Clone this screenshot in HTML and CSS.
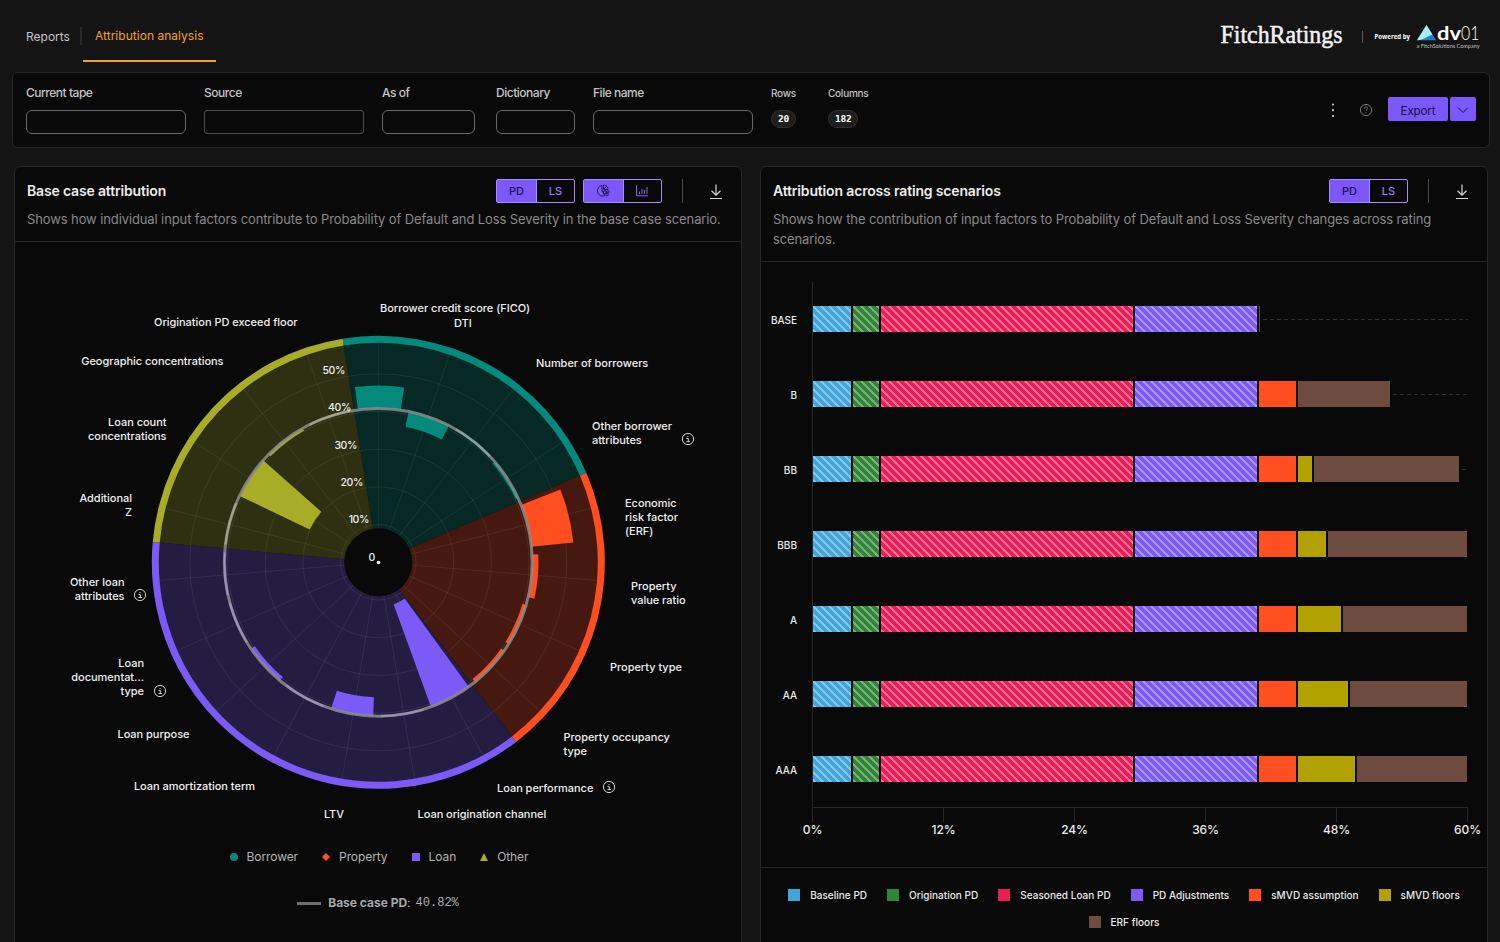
FILE: index.html
```html
<!DOCTYPE html>
<html lang="en">
<head>
    <meta charset="utf-8">
    <title>Attribution analysis</title>
    <link rel="stylesheet" href="styles.css">
</head>
<body>
    <header class="topbar">
        <nav class="tabs">
            <a class="tab">Reports</a>
            <a class="tab active">Attribution analysis</a>
        </nav>
        <div class="brand">
            <svg class="brand-logos" width="272" height="42" viewBox="1220 12 272 42">
                <text class="fitch" x="1220.5" y="43" textLength="122" lengthAdjust="spacingAndGlyphs">FitchRatings</text>
                <path d="M1362.5 31v12" stroke="#5a5a5a"/>
                <text class="powered" x="1374.5" y="39" textLength="35.5" lengthAdjust="spacingAndGlyphs">Powered by</text>
                <path d="M1426.5 25L1436 40.2H1416.8z" fill="#2b7fc0"/>
                <path d="M1426.5 25L1432.5 34.5C1428 36 1424 40 1417 40.2z" fill="#a5ecfb"/>
                <text class="dv" x="1437" y="40" textLength="24" lengthAdjust="spacingAndGlyphs">dv</text>
                <text class="num" x="1461" y="40" textLength="18.5" lengthAdjust="spacingAndGlyphs">01</text>
                <text class="sub" x="1416.5" y="48" textLength="63" lengthAdjust="spacingAndGlyphs">a FitchSolutions Company</text>
            </svg>
        </div>
    </header>

    <section class="filters">
        <div class="field"><label>Current tape</label><div class="input w-160"></div></div>
        <div class="field"><label>Source</label><div class="input w-160 readonly"></div></div>
        <div class="field"><label>As of</label><div class="input w-93"></div></div>
        <div class="field dictionary"><label>Dictionary</label><div class="input w-79"></div></div>
        <div class="field"><label>File name</label><div class="input w-160"></div></div>
        <div class="stat rows"><span>Rows</span><b>20</b></div>
        <div class="stat"><span>Columns</span><b>182</b></div>
        <div class="actions">
            <svg class="more" width="4" height="16" viewBox="0 0 4 16" fill="#d0d0d0">
                <circle cx="2" cy="2.5" r="1.1"/><circle cx="2" cy="8.2" r="1.1"/><circle cx="2" cy="14" r="1.1"/>
            </svg>
            <svg class="help" width="14" height="14" viewBox="0 0 14 14" fill="none" stroke="#7d7d7d">
                <circle cx="7" cy="7" r="5.6"/>
                <path d="M5.4 5.7C5.4 4.6 6.1 4 7 4s1.6.6 1.6 1.5C8.6 6.6 7 6.6 7 8M7 9.2v1"/>
            </svg>
            <button class="export">Export</button>
            <button class="export-menu">
                <svg width="12" height="12" viewBox="0 0 12 12" fill="none" stroke="#17102f"><path d="M1.2 3.7L6 8.5l4.8-4.8"/></svg>
            </button>
        </div>
    </section>

    <main class="cards">
        <section class="card">
            <div class="card-header">
                <div class="card-title">
                    <h2>Base case attribution</h2>
                    <div class="tools">
                        <div class="toggle"><span class="on">PD</span><span>LS</span></div>
                        <div class="toggle">
                            <span class="on">
                                <svg width="14" height="14" viewBox="0 0 14 14" fill="none" stroke="#1c1140" stroke-width=".9">
                                    <path d="M5 1.5A5.300 5.300 0 1 0 8 11.500L5 7z"/>
                                    <path d="M6.500 .900v4.500H11A4.500 4.500 0 0 0 6.500 .900zM6.500 5.400l3.200-3.200"/>
                                    <circle cx="7.800" cy="8" r="1.500"/><circle cx="10.900" cy="7.800" r="1.200"/><circle cx="10.100" cy="10.500" r="1.300"/>
                                </svg>
                            </span>
                            <span>
                                <svg width="14" height="14" viewBox="0 0 14 14" fill="none" stroke="#8468ea">
                                    <path d="M.5 1.500v10.300H12M3.500 10V7.500M6 10V5M8.500 10V6M11 10V3"/>
                                </svg>
                            </span>
                        </div>
                        <i class="divider"></i>
                        <svg class="download" width="14" height="16" viewBox="0 0 14 16" fill="none" stroke="#d8d8d8" stroke-width="1.2">
                            <path d="M7 .5v10.5M2.5 6.800L7 11.200l4.500-4.400M1 14.500h12"/>
                        </svg>
                    </div>
                </div>
                <p>Shows how individual input factors contribute to Probability of Default and Loss Severity in the base case scenario.</p>
            </div>
            <svg id="polar" class="polar" width="726" height="600" viewBox="15 242 726 600"></svg>
            <div class="polar-legend">
                <span><svg width="8" height="8"><circle cx="4" cy="4" r="4" fill="#038a7c"/></svg>Borrower</span>
                <span><svg width="8" height="8"><path d="M4 0l4 4-4 4-4-4z" fill="#ff4e20"/></svg>Property</span>
                <span><svg width="8" height="8"><path d="M0 0h8v8H0z" fill="#7b5af7"/></svg>Loan</span>
                <span><svg width="8" height="8"><path d="M4 0l4 8H0z" fill="#a7ad27"/></svg>Other</span>
            </div>
            <div class="base-case"><i></i><b>Base case PD</b>:<code>40.82%</code></div>
        </section>

        <section class="card">
            <div class="card-header">
                <div class="card-title">
                    <h2>Attribution across rating scenarios</h2>
                    <div class="tools">
                        <div class="toggle"><span class="on">PD</span><span>LS</span></div>
                        <i class="divider"></i>
                        <svg class="download" width="14" height="16" viewBox="0 0 14 16" fill="none" stroke="#d8d8d8" stroke-width="1.2">
                            <path d="M7 .5v10.5M2.5 6.800L7 11.200l4.500-4.400M1 14.500h12"/>
                        </svg>
                    </div>
                </div>
                <p>Shows how the contribution of input factors to Probability of Default and Loss Severity changes across rating scenarios.</p>
            </div>
            <div class="bars">
                <div class="bar-rows" id="barRows"></div>
                <div class="axis">
                    <span>0%</span><span>12%</span><span>24%</span><span>36%</span><span>48%</span><span>60%</span>
                </div>
            </div>
            <div class="bar-legend">
                <span><i class="baseline"></i>Baseline PD</span>
                <span><i class="origination"></i>Origination PD</span>
                <span><i class="seasoned"></i>Seasoned Loan PD</span>
                <span><i class="adjust"></i>PD Adjustments</span>
                <span><i class="smvd"></i>sMVD assumption</span>
                <span><i class="smvd-floor"></i>sMVD floors</span>
                <span><i class="erf"></i>ERF floors</span>
            </div>
        </section>
    </main>

    <script src="charts.js"></script>
</body>
</html>
```
FILE: styles.css
```css
* {
    box-sizing: border-box;
}

body {
    margin: 0;
    height: 942px;
    overflow: hidden;
    background: #141414;
    color: #c4c4c4;
    font-family: Inter, "Liberation Sans", sans-serif;
    font-size: 12px;
}

/* Top bar */
.topbar {
    display: flex;
    justify-content: space-between;
    height: 72px;
    padding: 0 8px 0 26px;
}

.tabs {
    display: flex;
    align-items: flex-start;
}

.tab {
    margin-top: 27px;
    height: 18px;
    padding-right: 10px;
    border-right: 2px solid #292929;
    line-height: 19px;
}

.tab.active {
    margin: 27px 0 0 1px;
    height: 35px;
    padding: 0 12px;
    border-right: 0;
    border-bottom: 2px solid #f5a31c;
    color: #f5a31c;
    line-height: 17px;
    letter-spacing: 0.03px;
}

.brand {
    padding-top: 12px;
}

.brand-logos {
    display: block;
}

.fitch {
    font: 25px "Liberation Serif", serif;
    fill: #f2f2f2;
    stroke: #f2f2f2;
    stroke-width: 0.5px;
}

.powered {
    font: 700 6.5px "Open Sans", sans-serif;
    fill: #fff;
}

.dv {
    font: 700 19px Lato, sans-serif;
    fill: #fff;
}

.num {
    font: 300 19.5px Lato, sans-serif;
    fill: #fff;
}

.sub {
    font: 5px Lato, sans-serif;
    fill: #c0c0c0;
}

/* Filters */
.filters {
    display: flex;
    gap: 18px;
    height: 76px;
    margin: 0 10px 0 12px;
    padding: 12px 13px;
    background: #090909;
    border: 1px solid #262626;
    border-radius: 6px;
}

.field label {
    display: block;
    height: 25px;
    line-height: 16px;
    letter-spacing: -0.48px;
    font-weight: 500;
}

.dictionary {
    margin-left: 3px;
}

.input {
    height: 24px;
    border: 1px solid #686868;
    border-radius: 6px;
}

.input.readonly {
    border-color: #4c4c4c;
    border-radius: 3px;
}

.w-160 { width: 160px; }
.w-93 { width: 93px; }
.w-79 { width: 79px; }

.stat {
    display: flex;
    flex-direction: column;
    align-items: flex-start;
    font-size: 10px;
    font-weight: 500;
    line-height: 17px;
    letter-spacing: -0.25px;
    width: 60px;
}

.stat.rows {
    width: 39px;
}

.stat b {
    margin-top: 8px;
    padding: 0 6px;
    height: 18px;
    border: 1px solid #303030;
    border-radius: 9px;
    background: #1e1e1e;
    color: #fff;
    font: 700 9.5px/16px "DejaVu Sans Mono", monospace;
}

.actions {
    display: flex;
    align-items: center;
    height: 24px;
    margin: 12px 0 0 auto;
}

.more {
    margin: 2px 24px 0 0;
}

.help {
    margin: 2px 15px 0 0;
}

button {
    height: 24px;
    border: 0;
    border-radius: 2px;
    background: #7c57fc;
    color: #17102f;
    font: 11.5px/24px Inter, sans-serif;
    padding: 0;
}

.export {
    width: 60px;
    padding-top: 2px;
    letter-spacing: -0.1px;
}

.export-menu {
    width: 26px;
    margin-left: 2px;
}

.export-menu svg {
    display: block;
    margin: 1px auto 0;
}

/* Cards */
.cards {
    display: flex;
    gap: 18px;
    padding: 18px 12px 0 14px;
}

.card {
    width: 728px;
    height: 800px;
    background: #090909;
    border: 1px solid #262626;
    border-radius: 6px 6px 0 0;
}

.card-header {
    padding: 12px 12px 12px;
    border-bottom: 1px solid #262626;
}

.card-title {
    display: flex;
    justify-content: space-between;
    height: 24px;
}

h2 {
    margin: 0;
    color: #ececec;
    font-size: 14px;
    font-weight: 600;
    line-height: 24px;
    letter-spacing: -0.16px;
}

.card-header p {
    margin: 6px 0 0;
    color: #8a8a8a;
    font-size: 13px;
    line-height: 20px;
    letter-spacing: -0.11px;
}

.tools {
    display: flex;
    align-items: center;
    padding-right: 6px;
}

.toggle {
    display: flex;
    width: 79px;
    height: 24px;
    margin-left: 8px;
    border: 1px solid #a78bfa;
    border-radius: 2px;
    color: #9479f5;
    font-size: 11px;
    font-weight: 500;
}

.toggle span {
    flex: 1;
    display: flex;
    align-items: center;
    justify-content: center;
}

.toggle .on {
    flex: 0 0 40px;
    background: #7c57fc;
    border-right: 1px solid #a78bfa;
    color: #1c1140;
}

.divider {
    width: 1px;
    height: 24px;
    margin: 0 26px 0 20px;
    background: #4a4a4a;
}

.download {
    margin-top: 2px;
}

/* Polar chart */
.polar {
    display: block;
    font-size: 11px;
    font-weight: 500;
    letter-spacing: -0.03px;
    fill: #f0f0f0;
}

.polar .grid {
    fill: none;
    stroke: #fff;
    stroke-opacity: 0.07;
}

.polar .reference {
    fill: none;
    stroke: #8c8c8c;
    stroke-opacity: 0.85;
    stroke-width: 3;
}

.polar .empty {
    fill: none;
    stroke-width: 2;
}

.polar .info {
    fill: none;
    stroke: #d0d0d0;
}

.polar .tick {
    font-size: 10.5px;
    letter-spacing: -0.4px;
}

.polar-legend {
    display: flex;
    justify-content: center;
    gap: 24px;
    height: 30px;
    padding-left: 2px;
    line-height: 30px;
    letter-spacing: -0.08px;
    color: #b5b5b5;
}

.polar-legend svg {
    margin-right: 9px;
}

.base-case {
    display: flex;
    align-items: center;
    justify-content: center;
    margin-top: 22px;
    height: 16px;
    color: #a8a8a8;
}

.base-case i {
    width: 24px;
    height: 3px;
    margin: 2px 7px 0 0;
    background: #707070;
}

.base-case code {
    margin: 1px 0 0 5px;
    font: 12px "Liberation Mono", monospace;
    color: #b0b0b0;
}

/* Scenario bars */
.bars {
    height: 605px;
    padding: 20px 19px 0 51px;
    color: #ececec;
}

.bar-rows {
    height: 525px;
    border-left: 1px solid #282828;
}

.bar-row {
    display: flex;
    align-items: center;
    height: 75px;
    margin-left: -46px;
    padding-bottom: 2px;
}

.bar-row label {
    flex: none;
    width: 30px;
    margin-right: 16px;
    padding-top: 3px;
    text-align: right;
    font-size: 10px;
    font-weight: 500;
}

.bar-row div {
    flex: none;
    height: 26px;
    margin-right: 2px;
}

.bar-row div:last-of-type {
    margin-right: 0;
}

.bar-row hr {
    flex: 1;
    height: 1px;
    margin: 2px 0 0 3px;
    border: 0;
    background: repeating-linear-gradient(90deg, #303030 0 4px, transparent 4px 7px);
}

.baseline { background-color: #40a5da; }
.origination { background-color: #318536; }
.seasoned { background-color: #e91e59; }
.adjust { background-color: #7b5af7; }
.smvd { background-color: #ff4e20; }
.smvd-floor { background-color: #b1a200; }
.erf { background-color: #6d4b3f; }

.striped {
    background-image: repeating-linear-gradient(45deg, rgba(255, 255, 255, 0.35) 0 2.4px, transparent 2.4px 5.66px);
}

.axis {
    display: flex;
    justify-content: space-between;
    height: 9px;
    border-top: 1px solid #282828;
    font-size: 12px;
    font-weight: 500;
    letter-spacing: -0.1px;
}

.axis span {
    display: flex;
    justify-content: center;
    width: 1px;
    height: 9px;
    padding-top: 14px;
    background: #282828;
}

.bar-legend {
    display: flex;
    flex-wrap: wrap;
    justify-content: center;
    gap: 11px 20px;
    padding: 19px 20px;
    border-top: 1px solid #262626;
    color: #ececec;
    font-size: 10px;
    font-weight: 500;
    line-height: 16px;
    letter-spacing: 0.02px;
}

.bar-legend span {
    display: flex;
    align-items: center;
}

.bar-legend i {
    width: 12px;
    height: 12px;
    margin-right: 10px;
}
```
FILE: charts.js
```js
const CX = 378.3, CY = 562.3, SCALE = 3.77, BASE = 40.82;
const STEP = 360 / 19;
const OFFSET = 0.4;

const groups = [
    { color: '#038a7c', fill: '#072925', line: '#87a59f', values: [46.9, 36.7, null, 40.1] },
    { color: '#ff4e20', fill: '#45190f', line: '#b09088', values: [52, 42.5, 39.8, 39.8] },
    { color: '#7b5af7', fill: '#251c42', line: '#9a92bb', values: [11.9, null, 35.8, null, 39.6, null, null] },
    { color: '#a7ad27', fill: '#2f2f12', line: '#a5a684', values: [null, 20.2, 40.1, null] }
];

function point(r, deg) {
    const a = deg * Math.PI / 180;
    return (CX + r * Math.sin(a)).toFixed(2) + ' ' + (CY - r * Math.cos(a)).toFixed(2);
}

function arc(r, a0, a1) {
    return `M${point(r, a0)}A${r} ${r} 0 ${a1 - a0 > 180 ? 1 : 0} 1 ${point(r, a1)}`;
}

function ring(r0, r1, a0, a1) {
    return `${arc(r1, a0, a1)}L${point(r0, a1)}A${r0} ${r0} 0 ${a1 - a0 > 180 ? 1 : 0} 0 ${point(r0, a0)}Z`;
}

let svg = '', bars = '', empty = '';
let index = 0;
groups.forEach(g => {
    const start = (index - 0.5) * STEP + OFFSET;
    const end = start + g.values.length * STEP;
    svg += `<path d="${ring(34, 220, start, end)}" fill="${g.fill}"/>`;
    svg += `<path d="${ring(219.5, 226.5, start, end)}" fill="${g.color}"/>`;
    g.values.forEach(v => {
        const mid = index * STEP + OFFSET;
        if (v === null) {
            empty += `<path class="empty" d="${arc(BASE * SCALE, mid - 8, mid + 8)}" stroke="${g.line}"/>`;
        } else {
            const lo = Math.min(v, BASE) * SCALE, hi = Math.max(v, BASE) * SCALE;
            bars += `<path d="${ring(lo, hi, mid - 8, mid + 8)}" fill="${g.color}"/>`;
        }
        index++;
    });
});

for (let p = 10; p <= 50; p += 10) {
    svg += `<circle class="grid" cx="${CX}" cy="${CY}" r="${p * SCALE}"/>`;
}
for (let i = 0; i < 19; i++) {
    svg += `<path class="grid" d="M${point(34, i * STEP)}L${point(219.5, i * STEP)}"/>`;
}
svg += bars;
svg += `<circle class="reference" cx="${CX}" cy="${CY}" r="${BASE * SCALE}"/>` + empty;
svg += `<circle cx="${CX + 0.2}" cy="${CY + 0.2}" r="1.8"/>`;

// x, y of the first line, anchor, lines
const labels = [
    [380, 312, 'start', ['Borrower credit score (FICO)']],
    [454, 327, 'start', ['DTI']],
    [536, 367, 'start', ['Number of borrowers']],
    [592, 430, 'start', ['Other borrower', 'attributes']],
    [625, 507, 'start', ['Economic', 'risk factor', '(ERF)']],
    [631, 590, 'start', ['Property', 'value ratio']],
    [610, 671, 'start', ['Property type']],
    [563.5, 741, 'start', ['Property occupancy', 'type']],
    [497, 792, 'start', ['Loan performance']],
    [417.5, 818, 'start', ['Loan origination channel']],
    [344, 818, 'end', ['LTV']],
    [255, 790, 'end', ['Loan amortization term']],
    [189.5, 738, 'end', ['Loan purpose']],
    [144, 667, 'end', ['Loan', 'documentat...', 'type']],
    [124.5, 586, 'end', ['Other loan', 'attributes']],
    [132, 502, 'end', ['Additional', 'Z']],
    [166.5, 426, 'end', ['Loan count', 'concentrations']],
    [223.5, 365, 'end', ['Geographic concentrations']],
    [297.5, 326, 'end', ['Origination PD exceed floor']]
];
labels.forEach(([x, y, anchor, lines]) => {
    lines.forEach((line, i) => {
        svg += `<text x="${x}" y="${y + i * 14}" text-anchor="${anchor}">${line}</text>`;
    });
});

const ticks = [[345, 374, '50%'], [351, 411, '40%'], [357, 449, '30%'], [363, 486, '20%'], [369, 523, '10%'], [375, 561, '0']];
ticks.forEach(([x, y, label]) => {
    svg += `<text class="tick" x="${x}" y="${y}" text-anchor="end">${label}</text>`;
});

[[688, 439], [609, 787], [160, 691], [140, 595]].forEach(([x, y]) => {
    svg += `<g class="info"><circle cx="${x}" cy="${y}" r="5.6"/><path d="M${x - 1.5} ${y - .5}h1.8v3M${x - 1.5} ${y + 2.5}h3.4M${x - .5} ${y - 2.5}h1"/></g>`;
});
document.getElementById('polar').innerHTML = svg;

const series = ['baseline', 'origination', 'seasoned', 'adjust', 'smvd', 'smvd-floor', 'erf'];
const seasoned = [38, 26, 252, 122];
const scenarios = [
    ['BASE', 0, 0, 1],
    ['B', 37, 0, 92],
    ['BB', 37, 14, 145],
    ['BBB', 37, 28, 139],
    ['A', 37, 43, 124],
    ['AA', 37, 50, 117],
    ['AAA', 37, 57, 110]
];
document.getElementById('barRows').innerHTML = scenarios.map(([name, ...rest]) => {
    const cells = seasoned.concat(rest).map((w, i) =>
        w ? `<div class="${series[i]}${i < 4 ? ' striped' : ''}" style="width: ${w}px"></div>` : '').join('');
    return `<div class="bar-row"><label>${name}</label>${cells}<hr></div>`;
}).join('');
```
